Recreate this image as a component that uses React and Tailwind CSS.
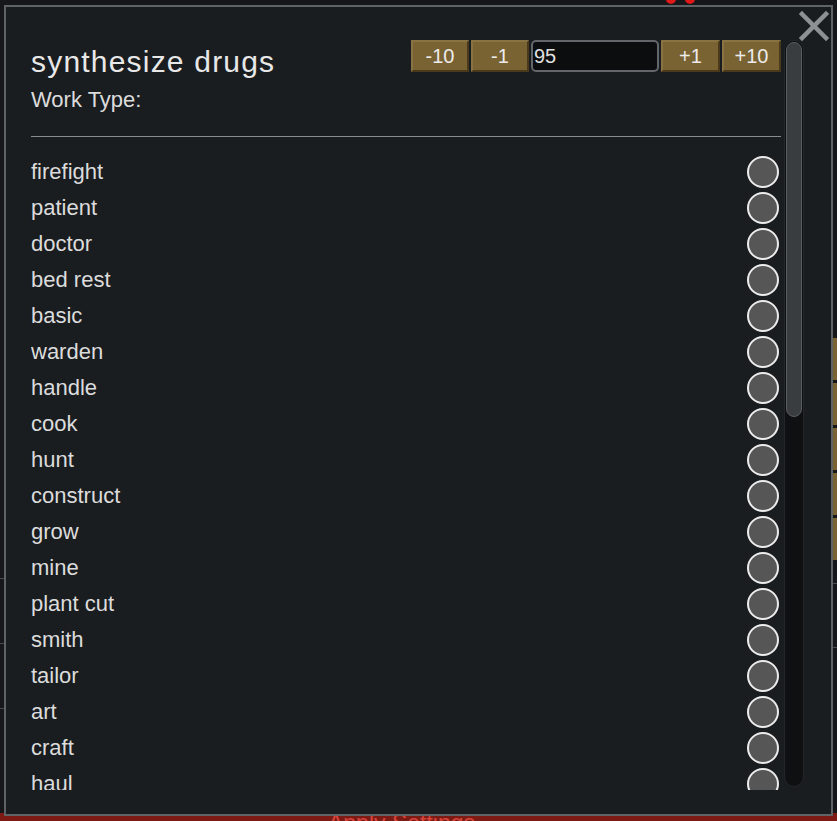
import { useState } from "react";

const WORK_TYPES = [
  "firefight",
  "patient",
  "doctor",
  "bed rest",
  "basic",
  "warden",
  "handle",
  "cook",
  "hunt",
  "construct",
  "grow",
  "mine",
  "plant cut",
  "smith",
  "tailor",
  "art",
  "craft",
  "haul",
  "clean",
];

function StepButton({ label, onClick, wide }) {
  return (
    <button
      onClick={onClick}
      className={`${wide ? "w-[59px]" : "w-[58px]"} h-[32px] flex items-center justify-center bg-[#7a6333] border-2 border-t-[#8a7342] border-l-[#8a7342] border-r-[#4a3a1b] border-b-[#4a3a1b] text-[20px] leading-none text-[#ececec] cursor-pointer`}
    >
      {label}
    </button>
  );
}

function WorkRow({ name }) {
  return (
    <div className="h-[36px] flex items-center justify-between pr-[2px]">
      <span className="text-[22px] leading-none text-[#dcdcdc]">{name}</span>
      <span className="w-[32px] h-[32px] rounded-full border-2 border-[#ececec] bg-[#565656]" />
    </div>
  );
}

export default function App() {
  const [priority, setPriority] = useState(95);

  return (
    <div
      className="relative w-[837px] h-[821px] overflow-hidden bg-[#15171a]"
      style={{ fontFamily: '"Liberation Sans", Arial, sans-serif' }}
    >
      {/* background page, mostly hidden by the dialog */}
      <div className="h-full flex flex-col">
        <div className="flex-1 flex justify-between">
          <div className="w-[4px] flex flex-col pt-[578px] gap-[64px]">
            <div className="h-px bg-[#4a4d50]" />
            <div className="h-px bg-[#4a4d50]" />
            <div className="h-px bg-[#4a4d50]" />
          </div>
          <div className="w-[5px] flex flex-col pt-[338px] gap-[3px]">
            <div className="h-[42px] bg-[#7a6333]" />
            <div className="h-[42px] bg-[#7a6333]" />
            <div className="h-[42px] bg-[#7a6333]" />
            <div className="h-[42px] bg-[#7a6333]" />
            <div className="h-[42px] bg-[#7a6333]" />
            <div className="mt-[20px] h-px bg-[#4a4d50]" />
            <div className="mt-[60px] h-px bg-[#4a4d50]" />
          </div>
        </div>
        <div className="h-[8px] bg-[#7c1a13] flex justify-center pr-[34px]">
          <span className="mt-[-1px] text-[23px] leading-none text-[#d8443c]">Apply Settings</span>
        </div>
      </div>

      <div className="absolute top-[-6px] left-[666px] flex gap-[9px]">
        <span className="w-[10px] h-[10px] rounded-full bg-[#e01818]" />
        <span className="w-[10px] h-[10px] rounded-full bg-[#e01818]" />
      </div>

      {/* dialog */}
      <div className="absolute left-[4px] top-[5px] w-[829px] h-[811px] bg-[#1a1d20] border-2 border-[#5f6366] flex pl-[25px]">
        <div className="w-[750px] pt-[33px] flex flex-col">
          <div className="flex justify-between items-start">
            <h1 className="mt-[2px] text-[30px] leading-[40px] tracking-[1.2px] text-[#e8e8e8]">
              synthesize drugs
            </h1>
            <div className="flex gap-[2px]">
              <StepButton label="-10" onClick={() => setPriority(priority - 10)} />
              <StepButton label="-1" onClick={() => setPriority(priority - 1)} />
              <input
                value={priority}
                onChange={(e) => setPriority(e.target.value)}
                className="w-[128px] h-[32px] bg-[#0c0d0e] border-2 border-[#62666a] rounded-[5px] px-[1px] text-[20px] text-[#e0e0e0] outline-none"
              />
              <StepButton label="+1" wide onClick={() => setPriority(priority + 1)} />
              <StepButton label="+10" wide onClick={() => setPriority(priority + 10)} />
            </div>
          </div>
          <p className="mt-[5px] text-[22px] leading-[26px] text-[#dcdcdc]">Work Type:</p>
          <div className="mt-[23px] h-px bg-[#8a8d90]" />
          <div className="mt-[17px] h-[636px] overflow-hidden">
            {WORK_TYPES.map((w) => (
              <WorkRow key={w} name={w} />
            ))}
          </div>
        </div>

        {/* scrollbar */}
        <div className="ml-[3px] mt-[33px] w-[20px] h-[747px] rounded-full bg-[#0e1012] border border-[#23262a] p-[1px]">
          <div className="h-[375px] rounded-full bg-[#3a3d40] border border-[#595d60]" />
        </div>

        <button className="absolute left-[792px] top-[3px] w-[32px] h-[32px] cursor-pointer">
          <svg viewBox="0 0 32 32" className="w-full h-full">
            <path d="M4 4 L28 28 M28 4 L4 28" stroke="#8e9194" strokeWidth="4.5" strokeLinecap="square" />
          </svg>
        </button>
      </div>
    </div>
  );
}
